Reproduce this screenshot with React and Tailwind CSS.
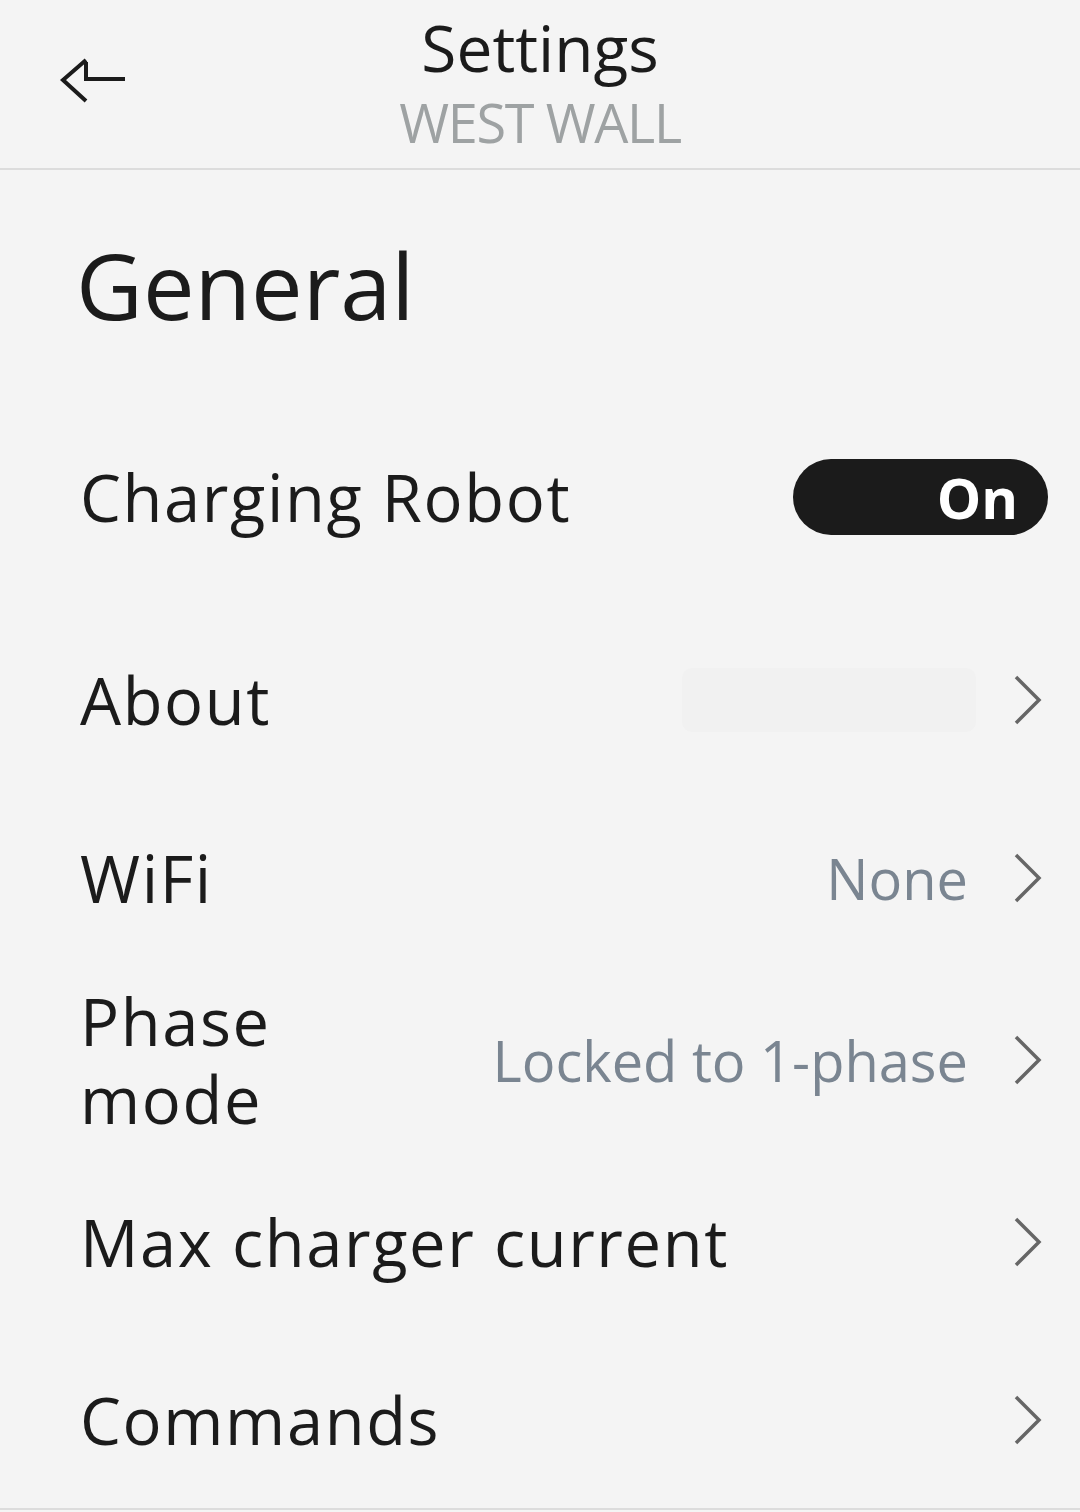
const Chevron = () => (
  <svg width="30" height="52" viewBox="0 0 30 52" fill="none" className="shrink-0">
    <path d="M4 3 L27 26 L4 49" stroke="#666666" strokeWidth="3.5" strokeLinejoin="miter" />
  </svg>
);

const Row = ({ label, value, box, children }) => (
  <div className={`flex items-center justify-between pl-[80px] pr-[38px] shrink-0 ${box}`}>
    <div className="text-[65px] leading-[78px] tracking-[0.025em] text-[#1b1b1b]">{label}</div>
    <div className="flex items-center gap-[44px]">
      {children}
      {value && <span className="text-[56px] leading-[70px] text-[#7a8591]">{value}</span>}
      <Chevron />
    </div>
  </div>
);

export default function App() {
  return (
    <div
      className="w-[1080px] h-[1512px] bg-[#f4f4f4] flex flex-col overflow-hidden"
      style={{ fontFamily: '"Open Sans", "Noto Sans", sans-serif' }}
    >
      {/* Header */}
      <div className="relative h-[170px] border-b-2 border-[#dcdcdc] flex flex-col items-center pt-[10px] shrink-0">
        <button className="absolute left-[56px] top-[54px]">
          <svg width="74" height="52" viewBox="0 0 74 52" fill="none">
            <path d="M30 6 L7 26 L30 47" stroke="#1b1b1b" strokeWidth="4" />
            <path d="M30 8 V25 H69" stroke="#1b1b1b" strokeWidth="4" />
          </svg>
        </button>
        <div className="text-[64px] leading-[76px] text-[#1b1b1b]">Settings</div>
        <div className="text-[54px] leading-[66px] mt-[3px] text-[#9ea2a3] tracking-tight">WEST WALL</div>
      </div>

      {/* General */}
      <div className="pl-[76px] pt-[69px] h-[240px] shrink-0">
        <h1 className="text-[92px] leading-[92px] font-medium text-[#1b1b1b]">General</h1>
      </div>

      <div className="flex items-center justify-between pl-[80px] pr-[32px] h-[174px] shrink-0">
        <div className="text-[65px] leading-[78px] tracking-[0.025em] text-[#1b1b1b]">Charging Robot</div>
        <div className="w-[255px] h-[76px] rounded-full bg-[#1b1b1b] flex items-center justify-end pr-[30px]">
          <span className="text-[56px] leading-[70px] font-bold text-white">On</span>
        </div>
      </div>

      <Row label="About" box="h-[232px]">
        <div className="w-[294px] h-[64px] rounded-[10px] bg-[#f1f1f1] -mr-[8px]"></div>
      </Row>
      <Row label="WiFi" value="None" box="h-[124px]" />
      <div className="flex items-center justify-between pl-[80px] pr-[38px] h-[240px] shrink-0">
        <div className="text-[65px] tracking-[0.025em] text-[#1b1b1b]">
          <div className="leading-[78px]">Phase</div>
          <div className="leading-[78px]">mode</div>
        </div>
        <div className="flex items-center gap-[44px]">
          <span className="text-[56px] leading-[70px] text-[#7a8591]">Locked to 1-phase</span>
          <Chevron />
        </div>
      </div>
      <Row label="Max charger current" box="h-[124px]" />
      <Row label="Commands" box="h-[204px] pt-[28px]" />
      <div className="border-b-2 border-[#dcdcdc]"></div>
    </div>
  );
}
